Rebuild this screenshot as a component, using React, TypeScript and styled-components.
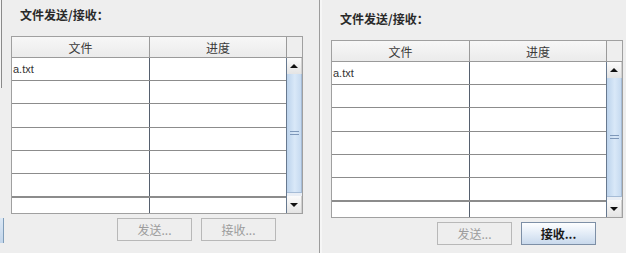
import styled, { createGlobalStyle } from 'styled-components';

const GlobalStyle = createGlobalStyle`
  html, body {
    margin: 0;
    padding: 0;
    background: #eeeeee;
  }
  * {
    box-sizing: border-box;
  }
`;

const Screen = styled.div`
  display: flex;
  flex-flow: row nowrap;
  width: 626px;
  height: 253px;
  overflow: hidden;
  background: #eeeeee;
  font-family: 'Noto Sans CJK SC', 'Liberation Sans', sans-serif;
`;

const LeftEdge = styled.div`
  width: 2px;
  display: flex;
  flex-flow: column nowrap;
`;

const EdgeLine = styled.div`
  height: 88px;
  border-right: 1px solid #8a8a8a;
  background: #f4f4f4;
`;

const EdgeStub = styled.div`
  margin-top: 130px;
  width: 4px;
  height: 25px;
  background: linear-gradient(#dce8f5, #c2d5ea);
  border-right: 1px solid #7f9db9;
`;

const Divider = styled.div`
  width: 2px;
  background: #f6f6f6;
`;

const Panel = styled.div<{ $width: number; $top: number; $ruled?: boolean }>`
  width: ${(p) => p.$width}px;
  display: flex;
  flex-flow: column nowrap;
  padding-top: ${(p) => p.$top}px;
  border-right: ${(p) => (p.$ruled ? '1px solid #9c9c9c' : 'none')};
`;

const Title = styled.div`
  margin-left: 18px;
  height: 16px;
  line-height: 16px;
  font-size: 12px;
  font-weight: bold;
  color: #2a2a2a;
`;

const Table = styled.div`
  margin: 13px 0 0 9px;
  width: 292px;
  height: 178px;
  border: 1px solid #a0a0a0;
  display: flex;
  flex-flow: column nowrap;
  background: #ffffff;
`;

const Header = styled.div`
  display: flex;
  flex-flow: row nowrap;
  height: 21px;
  border-bottom: 1px solid #9a9a9a;
  background: linear-gradient(#f7f7f7, #ebebeb);
`;

const HeaderCell = styled.div<{ $width: number }>`
  width: ${(p) => p.$width}px;
  display: flex;
  align-items: center;
  justify-content: center;
  font-size: 12px;
  color: #3a3a3a;
  border-right: 1px solid #9a9a9a;
`;

const Corner = styled.div`
  flex: 1;
  background: #eeeeee;
`;

const Body = styled.div`
  flex: 1;
  display: flex;
  flex-flow: row nowrap;
  overflow: hidden;
`;

const Rows = styled.div`
  width: 275px;
  overflow: hidden;
  border-right: 1px solid #67798f;
`;

const Row = styled.div<{ $height: number; $heavy?: boolean }>`
  display: flex;
  flex-flow: row nowrap;
  height: ${(p) => p.$height}px;
  border-bottom: ${(p) => (p.$heavy ? 2 : 1)}px solid #8c8c8c;
`;

const Cell = styled.div<{ $first?: boolean }>`
  width: ${(p) => (p.$first ? '138px' : 'auto')};
  flex: ${(p) => (p.$first ? 'none' : 1)};
  display: flex;
  align-items: center;
  padding-left: 1px;
  font-family: 'Liberation Sans', Arial, sans-serif;
  font-size: 11px;
  color: #333333;
  border-right: ${(p) => (p.$first ? '1px solid #56606e' : 'none')};
`;

const ScrollBar = styled.div`
  flex: 1;
  display: flex;
  flex-flow: column nowrap;
  background: #e9eef5;
`;

const ArrowButton = styled.div<{ $height: number }>`
  height: ${(p) => p.$height}px;
  display: flex;
  align-items: center;
  justify-content: center;
  background: linear-gradient(#fbfbfb, #e4e4e4);
  border-right: 1px solid #d0d0d0;
`;

const Triangle = styled.span<{ $down?: boolean }>`
  width: 0;
  height: 0;
  border-left: 4px solid transparent;
  border-right: 4px solid transparent;
  ${(p) => (p.$down ? 'border-top: 4px solid #111;' : 'border-bottom: 4px solid #111;')}
`;

const Track = styled.div`
  flex: 1;
  display: flex;
  flex-flow: column nowrap;
  padding-bottom: 3px;
`;

const Thumb = styled.div`
  flex: 1;
  display: flex;
  flex-flow: column nowrap;
  align-items: center;
  justify-content: center;
  gap: 2px;
  background: linear-gradient(to right, #bcd3ec, #d9e8f8 55%, #c6daf0);
  border-right: 1px solid #a6bcd6;
  border-bottom: 1px solid #a6bcd6;
`;

const Grip = styled.span`
  width: 9px;
  height: 1px;
  background: #7e98ba;
`;

const ButtonRow = styled.div`
  display: flex;
  flex-flow: row nowrap;
  gap: 9px;
  margin: 4px 0 0 115px;
`;

const Button = styled.div<{ $enabled?: boolean }>`
  width: 75px;
  height: 23px;
  display: flex;
  align-items: center;
  justify-content: center;
  font-size: 12px;
  font-weight: ${(p) => (p.$enabled ? 'bold' : 'normal')};
  color: ${(p) => (p.$enabled ? '#1a1a1a' : '#9c9c9c')};
  background: ${(p) =>
    p.$enabled ? 'linear-gradient(#fdfeff, #e3ecf7 50%, #c9d9ec)' : '#eeeeee'};
  border: 1px solid ${(p) => (p.$enabled ? '#7d8fa6' : '#b8b8b8')};
`;

const files = ['a.txt', '', '', '', '', '', ''];
const rowHeights = [23, 23, 24, 23, 23, 24, 23];

type TransferPanelProps = {
  width: number;
  top: number;
  ruled?: boolean;
  receiveEnabled?: boolean;
};

function TransferPanel({ width, top, ruled, receiveEnabled }: TransferPanelProps) {
  return (
    <Panel $width={width} $top={top} $ruled={ruled}>
      <Title>文件发送/接收：</Title>
      <Table>
        <Header>
          <HeaderCell $width={138}>文件</HeaderCell>
          <HeaderCell $width={137}>进度</HeaderCell>
          <Corner />
        </Header>
        <Body>
          <Rows>
            {files.map((name, i) => (
              <Row key={i} $height={rowHeights[i]} $heavy={i === 5}>
                <Cell $first>{name}</Cell>
                <Cell />
              </Row>
            ))}
          </Rows>
          <ScrollBar>
            <ArrowButton $height={16}>
              <Triangle />
            </ArrowButton>
            <Track>
              <Thumb>
                <Grip />
                <Grip />
              </Thumb>
            </Track>
            <ArrowButton $height={17}>
              <Triangle $down />
            </ArrowButton>
          </ScrollBar>
        </Body>
      </Table>
      <ButtonRow>
        <Button>发送...</Button>
        <Button $enabled={receiveEnabled}>接收...</Button>
      </ButtonRow>
    </Panel>
  );
}

export default function App() {
  return (
    <>
      <GlobalStyle />
      <Screen>
        <LeftEdge>
          <EdgeLine />
          <EdgeStub />
        </LeftEdge>
        <TransferPanel width={318} top={7} ruled />
        <Divider />
        <TransferPanel width={304} top={11} receiveEnabled />
      </Screen>
    </>
  );
}
